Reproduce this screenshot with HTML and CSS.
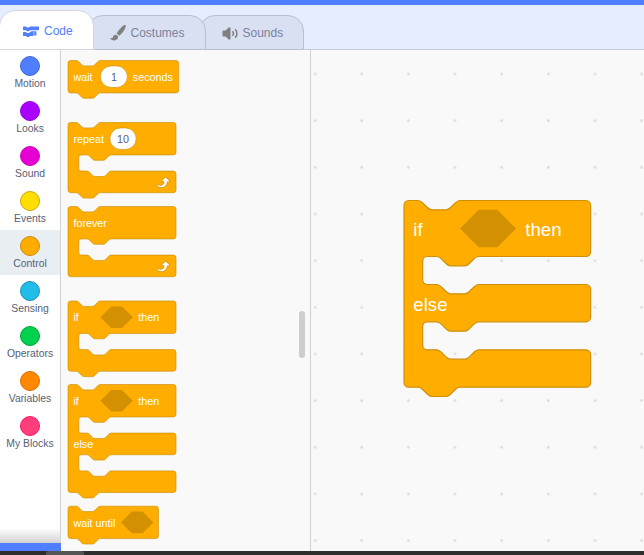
FILE: index.html
```
<!DOCTYPE html>
<html lang="en">
<head>
<meta charset="utf-8">
<title>Block editor</title>
<link rel="stylesheet" href="styles.css">
</head>
<body>
<div class="app">
  <div class="menu-bar"></div>
  <nav class="tabs">
    <div class="tab tab-code">
      <svg class="icon-code" viewBox="0 0 16 12"><path d="M.7.5H3l1 1h2l1-1h8.300q.7 0 .7.700v2.400q0 .7-.7.700H7l-1 1H4l-1-1H.7Q0 4.300 0 3.600V1.200Q0 .5.700.5zM.7 6H3l1 1h2l1-1h3q.7 0 .7.700v2.600q0 .7-.7.700H7l-1 1H4l-1-1H.7Q0 10 0 9.300V6.700Q0 6 .7 6zM8 5.300h4.700q.7 0 .7.700v2.800q0 .7-.7.700h-1.500V6H8z"/></svg>
      <span>Code</span>
    </div>
    <div class="tab tab-costumes">
      <svg class="icon-brush" viewBox="0 0 16 16"><path d="M15.500.3c-.7-.6-2 .1-3.200 1.200C10 3.700 7.500 6.600 6.800 8.300l-.1.500c1 .2 1.900 1 2.200 2l.6-.2c1.900-1.200 4.300-4.400 5.400-6.800.7-1.500 1.100-3 .6-3.500zM5.900 9.700c-1.500-.2-2.600.7-2.900 2-.3 1.200-1 1.700-2.400 1.500-.6 0-.7.500-.2.900 1.700 1.500 4.600 1.900 6.400.5 1.200-1 1.600-2.400 1-3.500-.4-.8-1-1.300-1.900-1.400z"/></svg>
      <span>Costumes</span>
    </div>
    <div class="tab tab-sounds">
      <svg class="icon-sound" viewBox="0 0 16 13"><path d="M.5 4.500Q.5 3.500 1.500 3.500H3.500L6.500.7Q8.500-.4 8.500 1.500V11.500Q8.500 13.300 6.500 12.300L3.500 9.500H1.500Q.5 9.500.5 8.500z"/><path class="wave" d="M10.800 4.800q1.500 1.700 0 3.400M13.500 2.800q3 3.700 0 7.400"/></svg>
      <span>Sounds</span>
    </div>
  </nav>
  <main class="editor">
    <aside class="categories">
      <div class="category"><i class="dot motion"></i><span>Motion</span></div>
      <div class="category"><i class="dot looks"></i><span>Looks</span></div>
      <div class="category"><i class="dot sound"></i><span>Sound</span></div>
      <div class="category"><i class="dot events"></i><span>Events</span></div>
      <div class="category selected"><i class="dot control"></i><span>Control</span></div>
      <div class="category"><i class="dot sensing"></i><span>Sensing</span></div>
      <div class="category"><i class="dot operators"></i><span>Operators</span></div>
      <div class="category"><i class="dot variables"></i><span>Variables</span></div>
      <div class="category"><i class="dot myblocks"></i><span>My Blocks</span></div>
      <div class="fade"></div>
      <div class="extension"></div>
    </aside>
    <section class="palette">
      <div class="block-list">
        <svg class="block wait" viewBox="0 0 164 48">
          <path class="body" d="M0 4a4 4 0 0 1 4-4h8c2 0 3 1 4 2l4 4c1 1 2 2 4 2h12c2 0 3-1 4-2l4-4c1-1 2-2 4-2H160a4 4 0 0 1 4 4v40a4 4 0 0 1-4 4H48c-2 0-3 1-4 2l-4 4c-1 1-2 2-4 2H24c-2 0-3-1-4-2l-4-4c-1-1-2-2-4-2H4a4 4 0 0 1-4-4z"/>
          <rect class="field" x="48" y="8" width="40" height="32" rx="16"/>
          <text x="8" y="30">wait</text><text class="value" x="68" y="30">1</text><text x="96" y="30">seconds</text>
        </svg>
        <svg class="block repeat" viewBox="0 0 160 104">
          <path class="body" d="M0 4a4 4 0 0 1 4-4h8c2 0 3 1 4 2l4 4c1 1 2 2 4 2h12c2 0 3-1 4-2l4-4c1-1 2-2 4-2H156a4 4 0 0 1 4 4v40a4 4 0 0 1-4 4H64c-2 0-3 1-4 2l-4 4c-1 1-2 2-4 2H40c-2 0-3-1-4-2l-4-4c-1-1-2-2-4-2h-8a4 4 0 0 0-4 4v16a4 4 0 0 0 4 4h8c2 0 3 1 4 2l4 4c1 1 2 2 4 2h12c2 0 3-1 4-2l4-4c1-1 2-2 4-2H156a4 4 0 0 1 4 4v24a4 4 0 0 1-4 4H48c-2 0-3 1-4 2l-4 4c-1 1-2 2-4 2H24c-2 0-3-1-4-2l-4-4c-1-1-2-2-4-2H4a4 4 0 0 1-4-4z"/>
          <rect class="field" x="62" y="8" width="39" height="32" rx="16"/>
          <text x="8" y="30">repeat</text><text class="value" x="81.500" y="30">10</text>
          <g id="loop" transform="translate(127.500 76.300)">
            <path class="loop-edge" d="M23.300 11c-.3.6-.9 1-1.500 1h-1.600c-.1 1.300-.5 2.500-1.100 3.600-.9 1.700-2.300 3.200-4.100 4.100-1.700.9-3.600 1.200-5.500.9-1.800-.3-3.500-1.100-4.900-2.300-.7-.7-.7-1.900 0-2.600.6-.6 1.600-.7 2.300-.2H7c.9.600 1.900.9 2.900.9s1.900-.3 2.700-.9c1.100-.8 1.800-2.100 1.800-3.500h-1.500c-.9 0-1.700-.7-1.700-1.700 0-.4.2-.9.5-1.200l4.400-4.400c.7-.6 1.700-.6 2.400 0L23 9.200c.5.500.6 1.200.3 1.800z"/>
            <path class="loop" d="M21.800 11h-2.600c0 1.500-.3 2.900-1 4.200-.8 1.600-2.100 2.800-3.700 3.600-1.500.8-3.300 1.100-4.900.8-1.600-.2-3.200-1-4.400-2.100-.4-.3-.4-.9-.1-1.200.3-.4.9-.4 1.200-.1 1 .7 2.200 1.100 3.400 1.100s2.300-.3 3.300-1c.9-.6 1.600-1.500 2-2.600.3-.9.4-1.800.2-2.800h-2.400c-.4 0-.7-.3-.7-.7 0-.2.1-.3.2-.4l4.400-4.400c.3-.3.7-.3.900 0L22 9.800c.3.300.4.600.3.900s-.3.300-.5.300z"/>
          </g>
        </svg>
        <svg class="block forever" viewBox="0 0 160 104">
          <path class="body" d="M0 4a4 4 0 0 1 4-4h8c2 0 3 1 4 2l4 4c1 1 2 2 4 2h12c2 0 3-1 4-2l4-4c1-1 2-2 4-2H156a4 4 0 0 1 4 4v40a4 4 0 0 1-4 4H64c-2 0-3 1-4 2l-4 4c-1 1-2 2-4 2H40c-2 0-3-1-4-2l-4-4c-1-1-2-2-4-2h-8a4 4 0 0 0-4 4v16a4 4 0 0 0 4 4h8c2 0 3 1 4 2l4 4c1 1 2 2 4 2h12c2 0 3-1 4-2l4-4c1-1 2-2 4-2H156a4 4 0 0 1 4 4v24a4 4 0 0 1-4 4H4a4 4 0 0 1-4-4z"/>
          <text x="8" y="30">forever</text>
          <use href="#loop"/>
        </svg>
        <svg class="block if" viewBox="0 0 160 104">
          <path class="body" d="M0 4a4 4 0 0 1 4-4h8c2 0 3 1 4 2l4 4c1 1 2 2 4 2h12c2 0 3-1 4-2l4-4c1-1 2-2 4-2H156a4 4 0 0 1 4 4v40a4 4 0 0 1-4 4H64c-2 0-3 1-4 2l-4 4c-1 1-2 2-4 2H40c-2 0-3-1-4-2l-4-4c-1-1-2-2-4-2h-8a4 4 0 0 0-4 4v16a4 4 0 0 0 4 4h8c2 0 3 1 4 2l4 4c1 1 2 2 4 2h12c2 0 3-1 4-2l4-4c1-1 2-2 4-2H156a4 4 0 0 1 4 4v24a4 4 0 0 1-4 4H48c-2 0-3 1-4 2l-4 4c-1 1-2 2-4 2H24c-2 0-3-1-4-2l-4-4c-1-1-2-2-4-2H4a4 4 0 0 1-4-4z"/>
          <path class="slot" d="M48 24L64 8H80L96 24 80 40H64z"/>
          <text x="8" y="30">if</text><text x="104" y="30">then</text>
        </svg>
        <svg class="block if-else" viewBox="0 0 160 160">
          <path id="if-else-body" class="body" d="M0 4a4 4 0 0 1 4-4h8c2 0 3 1 4 2l4 4c1 1 2 2 4 2h12c2 0 3-1 4-2l4-4c1-1 2-2 4-2H156a4 4 0 0 1 4 4v40a4 4 0 0 1-4 4H64c-2 0-3 1-4 2l-4 4c-1 1-2 2-4 2H40c-2 0-3-1-4-2l-4-4c-1-1-2-2-4-2h-8a4 4 0 0 0-4 4v16a4 4 0 0 0 4 4h8c2 0 3 1 4 2l4 4c1 1 2 2 4 2h12c2 0 3-1 4-2l4-4c1-1 2-2 4-2H156a4 4 0 0 1 4 4v24a4 4 0 0 1-4 4H64c-2 0-3 1-4 2l-4 4c-1 1-2 2-4 2H40c-2 0-3-1-4-2l-4-4c-1-1-2-2-4-2h-8a4 4 0 0 0-4 4v16a4 4 0 0 0 4 4h8c2 0 3 1 4 2l4 4c1 1 2 2 4 2h12c2 0 3-1 4-2l4-4c1-1 2-2 4-2H156a4 4 0 0 1 4 4v24a4 4 0 0 1-4 4H48c-2 0-3 1-4 2l-4 4c-1 1-2 2-4 2H24c-2 0-3-1-4-2l-4-4c-1-1-2-2-4-2H4a4 4 0 0 1-4-4z"/>
          <path class="slot" d="M48 24L64 8H80L96 24 80 40H64z"/>
          <text x="8" y="30">if</text><text x="104" y="30">then</text><text x="8" y="94">else</text>
        </svg>
        <svg class="block wait-until" viewBox="0 0 134 48">
          <path class="body" d="M0 4a4 4 0 0 1 4-4h8c2 0 3 1 4 2l4 4c1 1 2 2 4 2h12c2 0 3-1 4-2l4-4c1-1 2-2 4-2H130a4 4 0 0 1 4 4v40a4 4 0 0 1-4 4H48c-2 0-3 1-4 2l-4 4c-1 1-2 2-4 2H24c-2 0-3-1-4-2l-4-4c-1-1-2-2-4-2H4a4 4 0 0 1-4-4z"/>
          <path class="slot" d="M78.500 24l16-16h16l16 16-16 16h-16z"/>
          <text x="8" y="30.400">wait until</text>
        </svg>
      </div>
      <div class="scrollbar"></div>
    </section>
    <section class="workspace">
      <svg class="block placed" viewBox="0 0 160 160">
        <use href="#if-else-body"/>
        <path class="slot" d="M48 24L64 8H80L96 24 80 40H64z"/>
        <text x="8" y="30.300">if</text><text x="104" y="30.300">then</text><text x="8" y="94.600">else</text>
      </svg>
    </section>
  </main>
  <footer class="taskbar"><div class="task"></div></footer>
</div>
</body>
</html>
```
FILE: styles.css
```
* { box-sizing: border-box; }
body { margin: 0; font-family: "Liberation Sans", Arial, sans-serif; color: #575e75; }
.app { width: 644px; height: 555px; display: flex; flex-direction: column; overflow: hidden; background: #e5eeff; }
.menu-bar { height: 5px; flex: none; background: #517dff; }

.tabs { height: 45px; flex: none; display: flex; align-items: flex-end; border-bottom: 1px solid #c4cad6; }
.tab {
  display: flex; align-items: center; height: 35px; margin-bottom: -1px;
  border: 1px solid #b8c0d3; border-radius: 16px 16px 0 0;
  background: #d9e0f2; color: #7b819c; font-size: 12px; position: relative;
}
.tab svg { flex: none; overflow: visible; fill: #808080; }
.tab-code { z-index: 3; width: 95px; height: 40px; margin-left: -1px; padding: 1px 0 0 23px; background: #fff; border-color: #d3d6dc; color: #517dff; }
.tab-costumes { z-index: 2; width: 119px; margin-left: -7px; padding-left: 22px; }
.tab-sounds { z-index: 1; width: 105px; margin-left: -7px; padding-left: 22px; }
.tab .icon-code { width: 16px; height: 12px; margin: 2px 5px 0 0; fill: #517dff; }
.icon-brush { width: 16px; height: 16px; margin-right: 4.500px; }
.icon-sound { width: 16px; height: 13px; margin: 2px 4.500px 0 0; }
.icon-sound .wave { fill: none; stroke: #808080; stroke-width: 1.5; stroke-linecap: round; }

.editor { flex: 1; min-height: 0; display: flex; background: #f9f9f9; }
.categories { width: 61px; flex: none; display: flex; flex-direction: column; background: #fff; border-right: 1px solid #d3d3d3; }
.category { height: 45px; flex: none; display: flex; flex-direction: column; align-items: center; padding-top: 6px; font-size: 10.4px; line-height: 12px; white-space: nowrap; }
.category span { margin-top: 2px; }
.selected { background: #e9eef2; }
.dot { width: 20px; height: 20px; border-radius: 50%; border: 1px solid; }
.motion { background: #517dff; border-color: #4169d2; }
.looks { background: #aa00ff; border-color: #9400dd; }
.sound { background: #e600d2; border-color: #cc00ba; }
.events { background: #ffde00; border-color: #ccaa00; }
.control { background: #ffab00; border-color: #cf8b00; }
.sensing { background: #20bde9; border-color: #1c91b5; }
.operators { background: #00d24d; border-color: #00a33c; }
.variables { background: #ff8800; border-color: #db6e00; }
.myblocks { background: #ff3e7b; border-color: #ff1765; }
.fade { height: 15px; flex: none; margin-top: auto; background: linear-gradient(#fff, #d3d3d3); }
.extension { height: 8px; flex: none; width: 61px; background: #517dff; }

.palette {
  width: 250px; flex: none; display: flex; justify-content: space-between; border-right: 1px solid #d0d0d0;
}
.block-list { padding: 10px 0 0 7px; display: flex; flex-direction: column; align-items: flex-start; }
.scrollbar { width: 6px; height: 47px; margin: 261px 5px 0 0; border-radius: 3px; background: #cecece; }

.block { display: block; flex: none; overflow: visible; transform: translateY(0.5px); }
.block text { font-size: 16px; fill: #fff; }
.block .value { fill: #575e75; text-anchor: middle; }
.body { fill: #ffae00; stroke: #cf8f08; stroke-width: 1; }
.slot { fill: #d39000; }
.field { fill: #fff; stroke: #cf8f08; stroke-width: 1; }
.loop-edge { fill: #cf8f08; }
.loop { fill: #fff; }
.wait { width: 110.700px; height: 32.400px; }
.repeat { width: 108px; height: 70.200px; margin-top: 29.600px; }
.forever { width: 108px; height: 70.200px; margin-top: 13.800px; }
.if { width: 108px; height: 70.200px; margin-top: 24.800px; transform: none; }
.if-else { width: 108px; height: 108px; margin-top: 12.800px; }
.wait-until { width: 90.450px; height: 32.400px; margin-top: 14px; transform: translateY(0.2px); }

.workspace {
  flex: 1; position: relative;
  background-image: radial-gradient(circle at 50% 50%, #d9d9d9 0.8px, transparent 1.7px);
  background-size: 46.667px 46.667px;
  background-position: -19.300px 0.700px;
}
.placed { position: absolute; left: 93px; top: 150px; width: 186.667px; height: 186.667px; }

.taskbar { height: 4px; flex: none; background: #2f2e2d; padding-left: 46px; }
.task { width: 38px; height: 4px; border-radius: 3px 3px 0 0; background: #555; }
```
